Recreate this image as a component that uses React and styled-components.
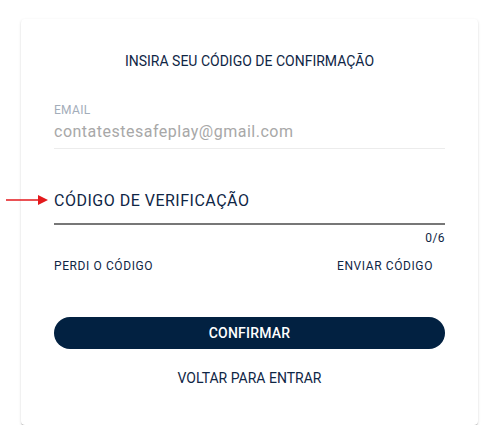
import React from 'react';
import styled, { createGlobalStyle } from 'styled-components';

const navy = '#0f2645';

const GlobalStyle = createGlobalStyle`
    body {
        margin: 0;
        background: #ffffff;
        font-family: Roboto, "Liberation Sans", sans-serif;
    }
`;

const Page = styled.div`
    position: relative;
    padding: 19px 0 0 21px;
`;

const Card = styled.div`
    width: 457px;
    box-sizing: border-box;
    padding: 32px 33px 37px;
    background: #fff;
    border-radius: 4px;
    box-shadow: 0 2px 1px -1px rgba(0, 0, 0, 0.2), 0 1px 1px 0 rgba(0, 0, 0, 0.14), 0 1px 3px 0 rgba(0, 0, 0, 0.12);
    display: flex;
    flex-direction: column;
`;

const Title = styled.h1`
    margin: 0;
    font-size: 14px;
    font-weight: 400;
    line-height: 20px;
    text-align: center;
    color: ${navy};
`;

const Field = styled.div`
    display: flex;
    flex-direction: column;
    margin-top: ${p => p.$top}px;
    padding-bottom: ${p => p.$pad}px;
    border-bottom: ${p => p.$line};
`;

const SmallLabel = styled.div`
    font-size: 12px;
    line-height: 14px;
    letter-spacing: 0.3px;
    color: #a3adba;
`;

const Value = styled.div`
    margin-top: 3px;
    font-size: 16px;
    line-height: 24px;
    letter-spacing: 0.5px;
    color: #a8a8a8;
`;

const BigLabel = styled.div`
    font-size: 16px;
    line-height: 24px;
    letter-spacing: 0.5px;
    color: ${navy};
`;

const Counter = styled.div`
    margin-top: 6px;
    font-size: 12px;
    line-height: 14px;
    letter-spacing: 0.4px;
    text-align: right;
    color: ${navy};
`;

const LinkRow = styled.div`
    margin-top: 13px;
    display: flex;
    justify-content: space-between;
`;

const TextLink = styled.span`
    font-size: 12px;
    line-height: 16px;
    letter-spacing: 0.6px;
    color: ${navy};
    padding-right: ${p => p.$right || 0}px;
`;

const Confirm = styled.button`
    margin-top: 43px;
    height: 32px;
    border: none;
    border-radius: 16px;
    background: #022141;
    color: #fff;
    font-family: inherit;
    font-size: 14px;
    font-weight: 500;
    letter-spacing: 0.2px;
    cursor: pointer;
`;

const BackLink = styled.div`
    margin-top: 19px;
    font-size: 14px;
    line-height: 20px;
    text-align: center;
    color: ${navy};
`;

const Arrow = styled.svg`
    position: absolute;
    left: 6px;
    top: 195px;
`;

export default function App() {
    return (
        <Page>
            <GlobalStyle />
            <Arrow width="42" height="10" viewBox="0 0 42 10">
                <line x1="0" y1="5" x2="34" y2="5" stroke="#e3191c" strokeWidth="1.6" />
                <polygon points="32,0 42,5 32,10" fill="#e3191c" />
            </Arrow>
            <Card>
                <Title>INSIRA SEU CÓDIGO DE CONFIRMAÇÃO</Title>
                <Field $top={32} $pad={4} $line="1px solid #ececec">
                    <SmallLabel>EMAIL</SmallLabel>
                    <Value>contatestesafeplay@gmail.com</Value>
                </Field>
                <Field $top={40} $pad={10} $line="2px solid #777777">
                    <BigLabel>CÓDIGO DE VERIFICAÇÃO</BigLabel>
                </Field>
                <Counter>0/6</Counter>
                <LinkRow>
                    <TextLink>PERDI O CÓDIGO</TextLink>
                    <TextLink $right={12}>ENVIAR CÓDIGO</TextLink>
                </LinkRow>
                <Confirm>CONFIRMAR</Confirm>
                <BackLink>VOLTAR PARA ENTRAR</BackLink>
            </Card>
        </Page>
    );
}
